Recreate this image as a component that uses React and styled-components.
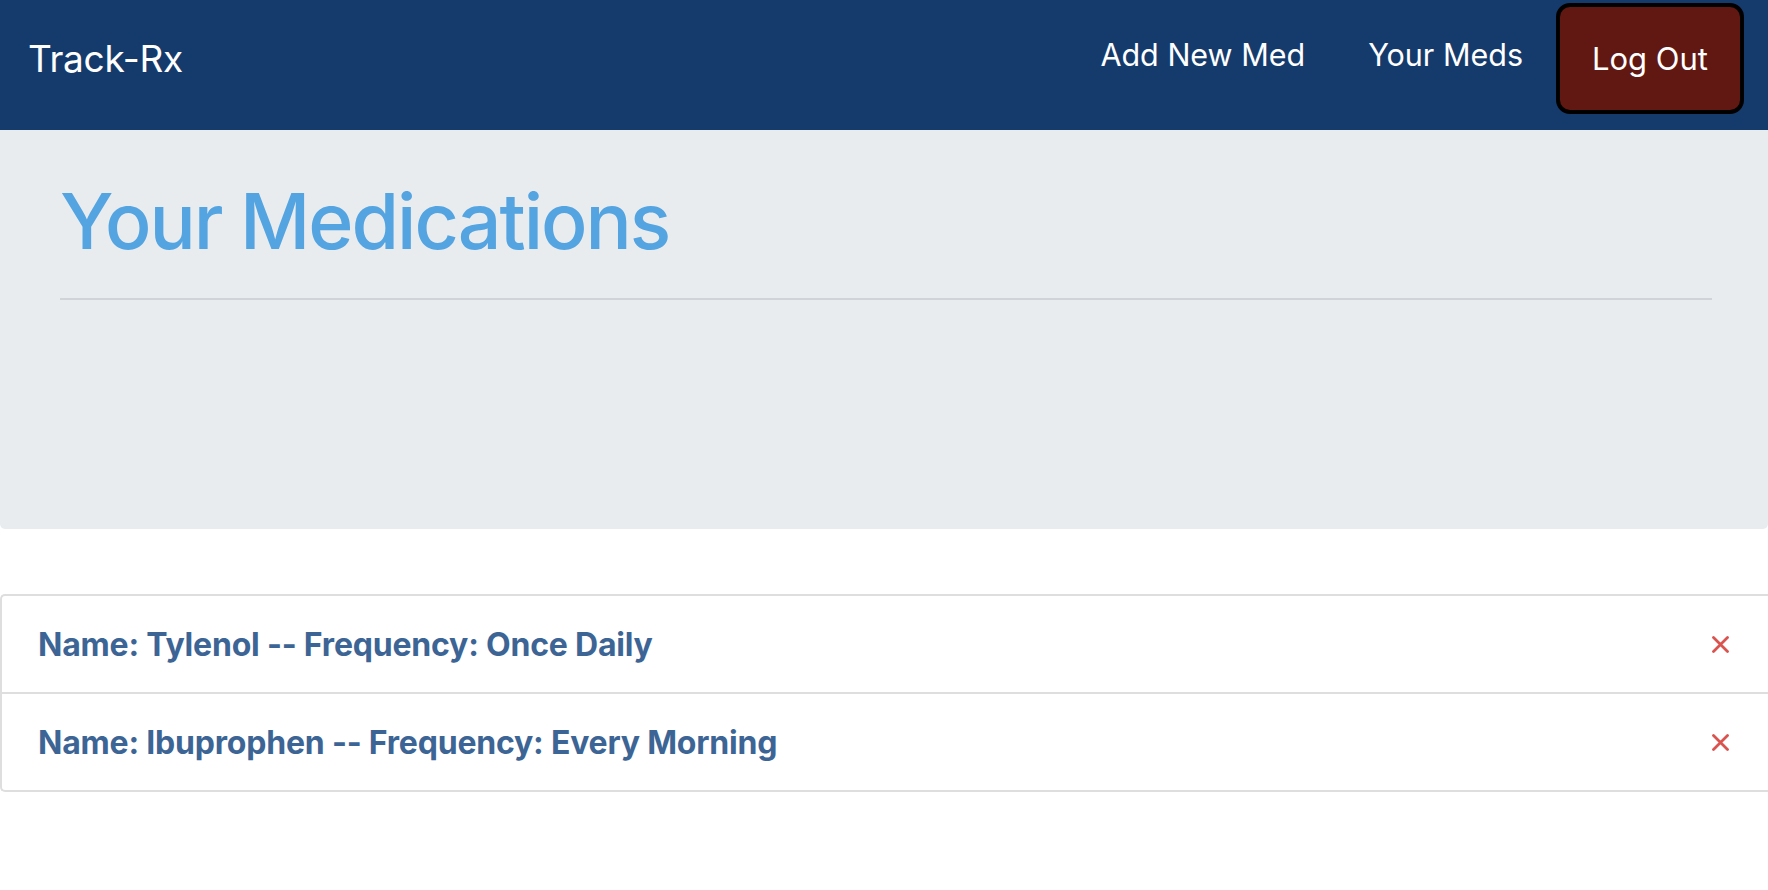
import React from "react";
import styled, { createGlobalStyle } from "styled-components";

const Global = createGlobalStyle`
  html, body { margin: 0; padding: 0; background: #ffffff; }
  body { font-family: Inter, "Noto Sans", "Liberation Sans", sans-serif; }
  * { box-sizing: border-box; }
`;

const NavBar = styled.nav`
  height: 130px;
  background: #153b6d;
  display: flex;
  align-items: center;
  justify-content: space-between;
  padding: 0 24px 14px 28px;
`;

const Brand = styled.a`
  color: #ffffff;
  font-size: 37px;
  font-weight: 400;
  text-decoration: none;
  letter-spacing: -0.3px;
`;

const NavLinks = styled.div`
  display: flex;
  align-items: center;
`;

const NavLink = styled.a`
  color: #ffffff;
  font-size: 30.5px;
  font-weight: 400;
  text-decoration: none;
  margin-right: ${(p) => p.$gap}px;
  margin-bottom: 8px;
`;

const LogOutButton = styled.button`
  width: 188px;
  height: 111px;
  background: #611812;
  border: 4px solid #000000;
  border-radius: 14px;
  color: #ffffff;
  font-family: inherit;
  font-size: 31px;
  font-weight: 400;
  cursor: pointer;
  padding: 0;
`;

const Jumbotron = styled.section`
  background: #e9ecef;
  padding: 44px 56px 229px 60px;
  border-radius: 0 0 5px 5px;
`;

const Title = styled.h1`
  margin: 0;
  font-size: 77px;
  line-height: 94px;
  font-weight: 500;
  color: #53a4e1;
  letter-spacing: -2px;
`;

const Rule = styled.hr`
  margin: 30px 0 0;
  border: 0;
  height: 2px;
  background: #d0d4d8;
`;

const MedList = styled.ul`
  list-style: none;
  margin: 65px 0 0;
  padding: 0;
  border: 2px solid #dedede;
  border-right: none;
  border-radius: 5px 0 0 5px;
`;

const MedRow = styled.li`
  height: ${(p) => (p.$last ? 96 : 98)}px;
  display: flex;
  align-items: center;
  justify-content: space-between;
  padding: 0 38px 0 36px;
  border-bottom: ${(p) => (p.$last ? "none" : "2px solid #dedede")};
`;

const MedText = styled.span`
  color: #3c6595;
  font-size: 32px;
  font-weight: 700;
  letter-spacing: -0.2px;
`;

const DeleteButton = styled.button`
  background: none;
  border: 0;
  padding: 0;
  width: 18px;
  height: 18px;
  display: flex;
  align-items: center;
  justify-content: center;
  cursor: pointer;
  margin-right: 1px;
`;

const meds = [
  { name: "Tylenol", frequency: "Once Daily" },
  { name: "Ibuprophen", frequency: "Every Morning" },
];

function CloseIcon() {
  return (
    <svg width="17" height="17" viewBox="0 0 17 17">
      <path d="M1.5 1.5 L15.5 15.5 M15.5 1.5 L1.5 15.5" stroke="#d9534f" strokeWidth="2.8" strokeLinecap="round" />
    </svg>
  );
}

export default function App() {
  return (
    <>
      <Global />
      <NavBar>
        <Brand href="#">Track-Rx</Brand>
        <NavLinks>
          <NavLink href="#" $gap={63}>Add New Med</NavLink>
          <NavLink href="#" $gap={33}>Your Meds</NavLink>
          <LogOutButton>Log Out</LogOutButton>
        </NavLinks>
      </NavBar>
      <Jumbotron>
        <Title>Your Medications</Title>
        <Rule />
      </Jumbotron>
      <MedList>
        {meds.map((m, i) => (
          <MedRow key={m.name} $last={i === meds.length - 1}>
            <MedText>
              Name: {m.name} -- Frequency: {m.frequency}
            </MedText>
            <DeleteButton aria-label="Delete">
              <CloseIcon />
            </DeleteButton>
          </MedRow>
        ))}
      </MedList>
    </>
  );
}
